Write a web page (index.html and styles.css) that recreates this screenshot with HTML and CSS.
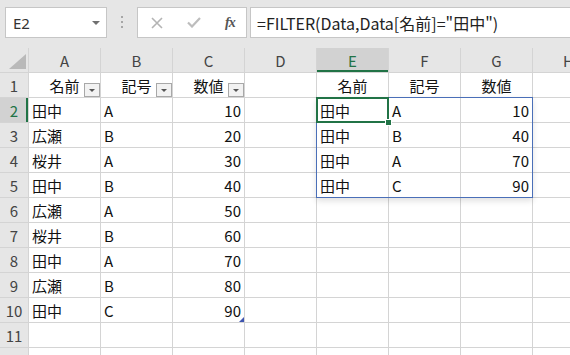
FILE: index.html
```html
<!DOCTYPE html>
<html lang="ja">
<head>
    <meta charset="UTF-8">
    <title>FILTER</title>
    <link rel="stylesheet" href="styles.css">
</head>
<body>

    <!-- 名前ボックスと数式バー -->
    <div class="toolbar">
        <div class="name-box">
            <span>E2</span>
            <span class="caret"></span>
        </div>
        <div class="grip"><i></i><i></i><i></i></div>
        <div class="fx-buttons">
            <svg width="12" height="12" viewBox="0 0 12 12"><path d="M1 1L11 11M11 1L1 11" stroke="#b4b4b4" stroke-width="1.6" fill="none"/></svg>
            <svg width="14" height="11" viewBox="0 0 14 11"><path d="M1 5.5L5 9.5L13 1" stroke="#bdbdbd" stroke-width="2.2" fill="none"/></svg>
            <span class="fx">fx</span>
        </div>
        <div class="formula">=FILTER(Data,Data[名前]="田中")</div>
    </div>

    <!-- シート -->
    <div class="sheet">
        <div class="corner"><span class="tri"></span></div>
        <div class="col-head">A</div>
        <div class="col-head">B</div>
        <div class="col-head">C</div>
        <div class="col-head">D</div>
        <div class="col-head sel">E</div>
        <div class="col-head">F</div>
        <div class="col-head">G</div>
        <div class="col-head">H</div>

        <div class="row-head">1</div>
        <div class="cell hdr">名前<span class="filter"></span></div>
        <div class="cell hdr">記号<span class="filter"></span></div>
        <div class="cell hdr">数値<span class="filter"></span></div>
        <div class="cell"></div>
        <div class="cell hdr">名前</div>
        <div class="cell hdr">記号</div>
        <div class="cell hdr">数値</div>
        <div class="cell"></div>

        <div class="row-head sel">2</div>
        <div class="cell">田中</div>
        <div class="cell">A</div>
        <div class="cell num">10</div>
        <div class="cell"></div>
        <div class="cell active">田中<span class="handle"></span></div>
        <div class="cell">A</div>
        <div class="cell num">10</div>
        <div class="cell"></div>

        <div class="row-head">3</div>
        <div class="cell">広瀬</div>
        <div class="cell">B</div>
        <div class="cell num">20</div>
        <div class="cell"></div>
        <div class="cell">田中</div>
        <div class="cell">B</div>
        <div class="cell num">40</div>
        <div class="cell"></div>

        <div class="row-head">4</div>
        <div class="cell">桜井</div>
        <div class="cell">A</div>
        <div class="cell num">30</div>
        <div class="cell"></div>
        <div class="cell">田中</div>
        <div class="cell">A</div>
        <div class="cell num">70</div>
        <div class="cell"></div>

        <div class="row-head">5</div>
        <div class="cell">田中</div>
        <div class="cell">B</div>
        <div class="cell num">40</div>
        <div class="cell"></div>
        <div class="cell">田中</div>
        <div class="cell">C</div>
        <div class="cell num">90</div>
        <div class="cell"></div>

        <div class="row-head">6</div>
        <div class="cell">広瀬</div>
        <div class="cell">A</div>
        <div class="cell num">50</div>
        <div class="cell"></div><div class="cell"></div><div class="cell"></div><div class="cell"></div><div class="cell"></div>

        <div class="row-head">7</div>
        <div class="cell">桜井</div>
        <div class="cell">B</div>
        <div class="cell num">60</div>
        <div class="cell"></div><div class="cell"></div><div class="cell"></div><div class="cell"></div><div class="cell"></div>

        <div class="row-head">8</div>
        <div class="cell">田中</div>
        <div class="cell">A</div>
        <div class="cell num">70</div>
        <div class="cell"></div><div class="cell"></div><div class="cell"></div><div class="cell"></div><div class="cell"></div>

        <div class="row-head">9</div>
        <div class="cell">広瀬</div>
        <div class="cell">B</div>
        <div class="cell num">80</div>
        <div class="cell"></div><div class="cell"></div><div class="cell"></div><div class="cell"></div><div class="cell"></div>

        <div class="row-head">10</div>
        <div class="cell">田中</div>
        <div class="cell">C</div>
        <div class="cell num resize">90</div>
        <div class="cell"></div><div class="cell"></div><div class="cell"></div><div class="cell"></div><div class="cell"></div>

        <div class="row-head">11</div>
        <div class="cell"></div><div class="cell"></div><div class="cell"></div><div class="cell"></div><div class="cell"></div><div class="cell"></div><div class="cell"></div><div class="cell"></div>

        <div class="row-head">12</div>
        <div class="cell"></div><div class="cell"></div><div class="cell"></div><div class="cell"></div><div class="cell"></div><div class="cell"></div><div class="cell"></div><div class="cell"></div>
    </div>

</body>
</html>
```

FILE: styles.css
```css
body {
    margin: 0;
    width: 570px;
    height: 355px;
    overflow: hidden;
    background-color: #fff;
    font-family: "Noto Sans CJK JP", sans-serif;
    color: #222;
}

/* 上部のバー */
.toolbar {
    height: 48px;
    box-sizing: border-box;
    padding-top: 7px;
    background-color: #e6e6e6;
    display: flex;
    align-items: flex-start;
    white-space: nowrap;
}

.name-box {
    margin-left: 5px;
    width: 102px;
    height: 31px;
    box-sizing: border-box;
    background-color: #fff;
    border: 1px solid #c6c6c6;
    display: flex;
    align-items: center;
    justify-content: space-between;
    padding: 0 6px 0 7px;
    font-family: "Noto Sans", sans-serif;
    font-size: 15px;
    color: #333;
}

.caret {
    width: 0;
    height: 0;
    border-left: 4px solid transparent;
    border-right: 4px solid transparent;
    border-top: 4px solid #707070;
}

.grip {
    margin: 9px 14px 0 14px;
    display: flex;
    flex-direction: column;
    gap: 3px;
}

.grip i {
    display: block;
    width: 2px;
    height: 2px;
    background-color: #a6a6a6;
}

.fx-buttons {
    width: 110px;
    height: 31px;
    box-sizing: border-box;
    background-color: #fff;
    border: 1px solid #c6c6c6;
    display: flex;
    align-items: center;
    padding-left: 13px;
    gap: 24px;
}

.fx {
    font-family: "Liberation Serif", serif;
    font-style: italic;
    font-weight: bold;
    font-size: 14px;
    color: #555;
    letter-spacing: -1px;
}

.formula {
    margin-left: 3px;
    flex: 1;
    height: 31px;
    box-sizing: border-box;
    background-color: #fff;
    border: 1px solid #c6c6c6;
    border-right: none;
    padding-left: 6px;
    display: flex;
    align-items: center;
    font-size: 16px;
    color: #222;
}

/* シート */
.sheet {
    display: grid;
    grid-template-columns: 28px repeat(8, 71px);
    grid-template-rows: 24px;
    grid-auto-rows: 24px;
    gap: 1px;
    background-color: #d4d4d4;
    font-size: 15px;
}

.corner {
    background-color: #e6e6e6;
    display: flex;
    align-items: flex-end;
    justify-content: flex-end;
    padding: 0 2px 3px 0;
}

.tri {
    width: 17px;
    height: 15px;
    background-color: #b9b9b9;
    clip-path: polygon(100% 0, 100% 100%, 0 100%);
}

.col-head,
.row-head {
    background-color: #e6e6e6;
    color: #444;
    display: flex;
    align-items: center;
    justify-content: center;
}

.col-head.sel {
    background-color: #d2d2d2;
    color: #217346;
    box-shadow: inset 0 -2px #217346;
}

.row-head.sel {
    background-color: #d2d2d2;
    color: #217346;
    box-shadow: inset -2px 0 #217346;
}

.cell {
    background-color: #fff;
    padding: 0 3px;
    display: flex;
    align-items: center;
    color: #111;
}

.num {
    justify-content: flex-end;
}

.hdr {
    justify-content: center;
    position: relative;
}

.filter {
    position: absolute;
    right: 0;
    bottom: 0;
    width: 16px;
    height: 14px;
    box-sizing: border-box;
    background-color: #f2f2f2;
    border: 1px solid #a8a8a8;
}

.filter::after {
    content: '';
    position: absolute;
    left: 4px;
    top: 5px;
    border-left: 3px solid transparent;
    border-right: 3px solid transparent;
    border-top: 3px solid #555;
}

/* アクティブセルとスピル範囲 */
.active {
    position: relative;
    z-index: 2;
}

.active::before {
    content: '';
    position: absolute;
    left: -1px;
    top: -1px;
    width: 217px;
    height: 101px;
    box-sizing: border-box;
    border: 1px solid #4a6fb8;
    box-shadow: 0 3px 6px rgba(0, 0, 0, 0.12);
}

.active::after {
    content: '';
    position: absolute;
    left: -1px;
    top: -1px;
    right: -1px;
    bottom: -1px;
    border: 2px solid #217346;
}

.handle {
    position: absolute;
    right: -4px;
    bottom: -4px;
    width: 5px;
    height: 5px;
    background-color: #217346;
    border: 1px solid #fff;
    z-index: 1;
}

.resize {
    position: relative;
}

.resize::after {
    content: '';
    position: absolute;
    right: 0;
    bottom: 0;
    width: 5px;
    height: 5px;
    background-color: #3f55b0;
    clip-path: polygon(100% 0, 100% 100%, 0 100%);
}
```
